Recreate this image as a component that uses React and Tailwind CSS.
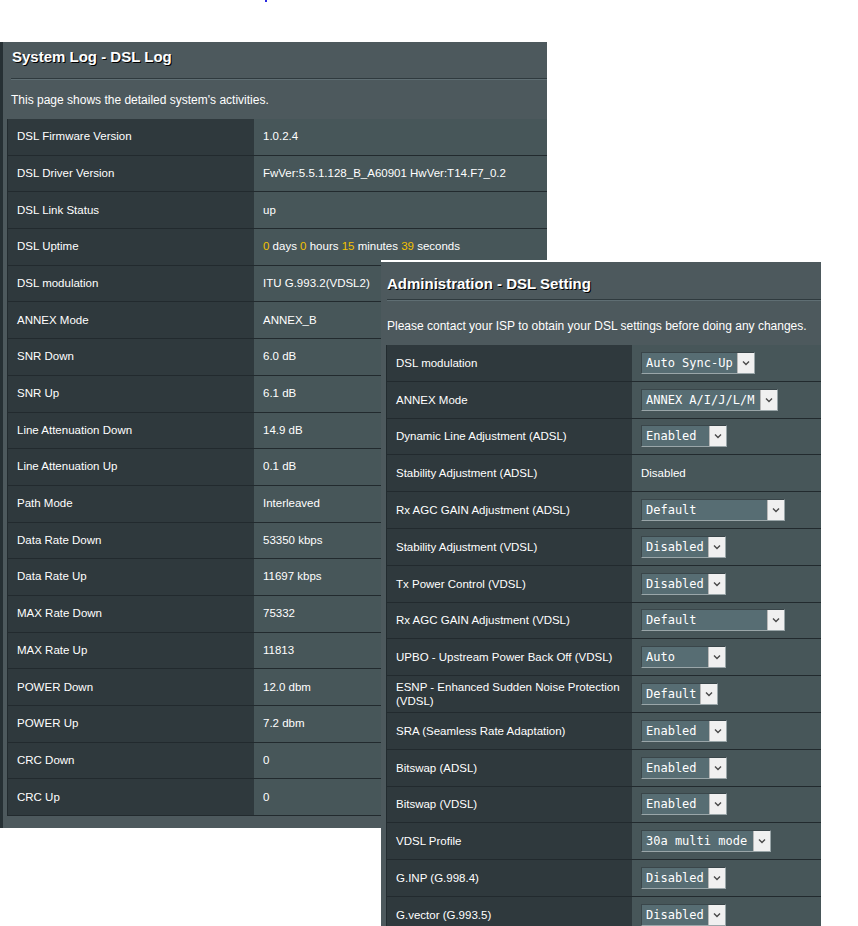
import React from 'react';

const logRows = [
  ['DSL Firmware Version', '1.0.2.4'],
  ['DSL Driver Version', 'FwVer:5.5.1.128_B_A60901 HwVer:T14.F7_0.2'],
  ['DSL Link Status', 'up'],
  ['DSL Uptime', 'uptime'],
  ['DSL modulation', 'ITU G.993.2(VDSL2)'],
  ['ANNEX Mode', 'ANNEX_B'],
  ['SNR Down', '6.0 dB'],
  ['SNR Up', '6.1 dB'],
  ['Line Attenuation Down', '14.9 dB'],
  ['Line Attenuation Up', '0.1 dB'],
  ['Path Mode', 'Interleaved'],
  ['Data Rate Down', '53350 kbps'],
  ['Data Rate Up', '11697 kbps'],
  ['MAX Rate Down', '75332'],
  ['MAX Rate Up', '11813'],
  ['POWER Down', '12.0 dbm'],
  ['POWER Up', '7.2 dbm'],
  ['CRC Down', '0'],
  ['CRC Up', '0'],
];

const settingRows = [
  { label: 'DSL modulation', value: 'Auto Sync-Up', w: 'w-[114px]' },
  { label: 'ANNEX Mode', value: 'ANNEX A/I/J/L/M', w: 'w-[137px]' },
  { label: 'Dynamic Line Adjustment (ADSL)', value: 'Enabled', w: 'w-[86px]' },
  { label: 'Stability Adjustment (ADSL)', text: 'Disabled' },
  { label: 'Rx AGC GAIN Adjustment (ADSL)', value: 'Default', w: 'w-[144px]' },
  { label: 'Stability Adjustment (VDSL)', value: 'Disabled', w: 'w-[85px]' },
  { label: 'Tx Power Control (VDSL)', value: 'Disabled', w: 'w-[85px]' },
  { label: 'Rx AGC GAIN Adjustment (VDSL)', value: 'Default', w: 'w-[144px]' },
  { label: 'UPBO - Upstream Power Back Off (VDSL)', value: 'Auto', w: 'w-[85px]' },
  { label: 'ESNP - Enhanced Sudden Noise Protection', label2: '(VDSL)', value: 'Default', w: 'w-[77px]' },
  { label: 'SRA (Seamless Rate Adaptation)', value: 'Enabled', w: 'w-[86px]' },
  { label: 'Bitswap (ADSL)', value: 'Enabled', w: 'w-[86px]' },
  { label: 'Bitswap (VDSL)', value: 'Enabled', w: 'w-[86px]' },
  { label: 'VDSL Profile', value: '30a multi mode', w: 'w-[130px]' },
  { label: 'G.INP (G.998.4)', value: 'Disabled', w: 'w-[85px]' },
  { label: 'G.vector (G.993.5)', value: 'Disabled', w: 'w-[85px]' },
];

const Y = ({ children }) => <span className="text-[#f2c200]">{children}</span>;

const Uptime = () => (
  <span>
    <Y>0</Y> days <Y>0</Y> hours <Y>15</Y> minutes <Y>39</Y> seconds
  </span>
);

const FakeSelect = ({ value, w }) => (
  <div className={`flex h-[22px] ${w} border border-[#3a464a] border-b-[#9aa6a9] border-r-[#9aa6a9]`}>
    <div className="flex-1 flex items-center pl-[4px] bg-[#576d73] text-white text-[12px] whitespace-nowrap overflow-hidden font-['DejaVu_Sans_Mono','Liberation_Mono',monospace]">
      {value}
    </div>
    <div className="w-[17px] flex items-center justify-center bg-[#f0f0f0] border-l border-[#b8b8b8]">
      <svg width="8" height="6" viewBox="0 0 8 6">
        <path d="M1 1.5 L4 4.5 L7 1.5" fill="none" stroke="#4a4a4a" strokeWidth="1.4" />
      </svg>
    </div>
  </div>
);

const Separator = ({ className }) => (
  <div className={`h-[2px] border-t border-[#2f3a3e] border-b border-b-[#5f6e73] ${className}`} />
);

const App = () => {
  return (
    <div className="relative w-[858px] h-[926px] bg-white overflow-hidden font-['Liberation_Sans',Arial,sans-serif] text-white">
      <div className="absolute left-[265px] top-0 w-[2px] h-[2px] bg-[#2a2ae0]" />

      {/* System Log window */}
      <div className="absolute left-0 top-[42px] w-[547px] h-[786px] bg-[#4d595d] border-l-[3px] border-[#263034] overflow-hidden">
        <div className="pl-[9px] h-[30px] leading-[30px] text-[15px] font-bold whitespace-nowrap [text-shadow:1px_1px_0_#000]">
          System Log - DSL Log
        </div>
        <Separator className="mt-[6px] ml-[8px]" />
        <div className="h-[39px] flex items-center pl-[8px] text-[12px] whitespace-nowrap">
          This page shows the detailed system's activities.
        </div>
        <div className="ml-[4px] w-[600px] border-l border-[#222b2f]">
          {logRows.map(([label, value]) => (
            <div key={label} className="flex h-[36.7px] border-b border-[#222a2e] text-[11.5px]">
              <div className="w-[246px] flex items-center pl-[9px] bg-[#2f393d] whitespace-nowrap">{label}</div>
              <div className="flex-1 flex items-center pl-[9px] bg-[#475659] whitespace-nowrap">
                {value === 'uptime' ? <Uptime /> : value}
              </div>
            </div>
          ))}
        </div>
      </div>

      {/* DSL Setting window */}
      <div className="absolute left-[381px] top-[260px] w-[440px] h-[666px] bg-[#4d595d] border-t-2 border-white overflow-hidden">
        <div className="pt-[7px] pl-[6px] h-[37px] leading-[30px] text-[15px] font-bold whitespace-nowrap [text-shadow:1px_1px_0_#000]">
          Administration - DSL Setting
        </div>
        <Separator className="ml-[6px]" />
        <div className="h-[44px] pt-[5px] flex items-center pl-[6px] text-[12px] whitespace-nowrap">
          Please contact your ISP to obtain your DSL settings before doing any changes.
        </div>
        <div className="ml-[5px] w-[480px] border-l border-[#222b2f]">
          {settingRows.map((row) => (
            <div key={row.label + (row.value || '')} className="flex h-[36.8px] border-b border-[#222a2e] text-[11.5px]">
              <div className="w-[245px] flex flex-col justify-center pl-[9px] bg-[#2f393d] whitespace-nowrap leading-[14px]">
                <span>{row.label}</span>
                {row.label2 && <span>{row.label2}</span>}
              </div>
              <div className="flex-1 flex items-center pl-[9px] bg-[#475659]">
                {row.text ? <span>{row.text}</span> : <FakeSelect value={row.value} w={row.w} />}
              </div>
            </div>
          ))}
        </div>
      </div>
    </div>
  );
};

export default App;
